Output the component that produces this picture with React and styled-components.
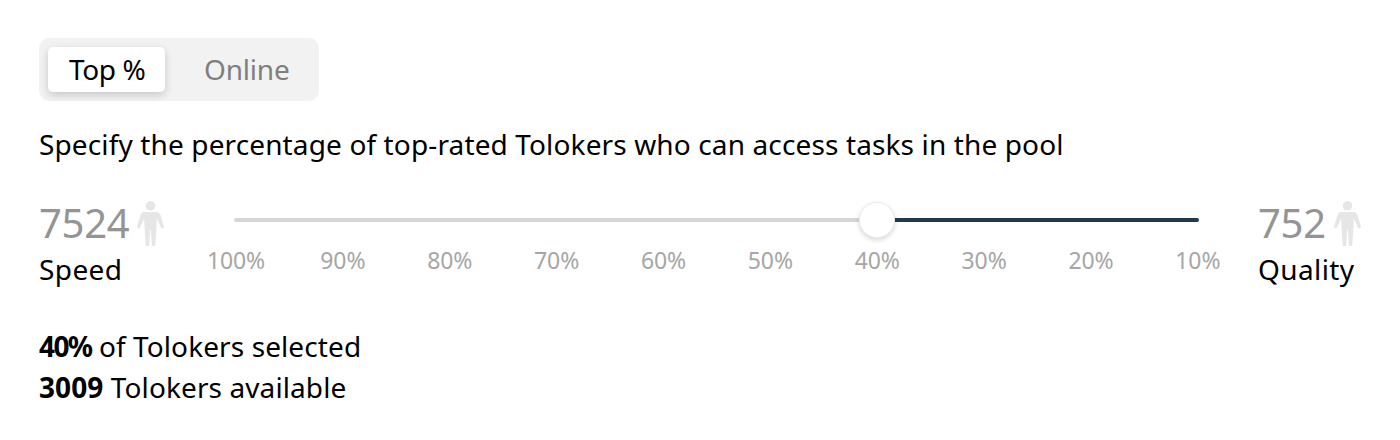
import React from "react";
import styled, { createGlobalStyle } from "styled-components";

const Global = createGlobalStyle`
  html, body { margin: 0; padding: 0; background: #fff; }
  body { font-family: "Noto Sans", "Open Sans", sans-serif; color: #000; }
`;

const Page = styled.div`
  width: 1400px;
  height: 440px;
  box-sizing: border-box;
  padding: 38px 39px 0;
  overflow: hidden;
`;

const Tabs = styled.div`
  display: flex;
  box-sizing: border-box;
  width: 280px;
  height: 63px;
  padding: 9px;
  background: #f2f2f2;
  border-radius: 10px;
`;

const Tab = styled.div`
  display: flex;
  align-items: center;
  box-sizing: border-box;
  width: ${(p) => (p.$active ? "117px" : "145px")};
  height: 45px;
  padding: 0 0 2px ${(p) => (p.$active ? "21px" : "39px")};
  font-size: 28px;
  letter-spacing: ${(p) => (p.$active ? "-0.4px" : "-0.2px")};
  border-radius: 5px;
  color: ${(p) => (p.$active ? "#000" : "#7f7f7f")};
  background: ${(p) => (p.$active ? "#fff" : "transparent")};
  box-shadow: ${(p) => (p.$active ? "0 3px 8px rgba(0,0,0,0.18)" : "none")};
`;

const Hint = styled.div`
  margin-top: 24px;
  font-size: 28px;
  line-height: 38px;
  letter-spacing: 0.13px;
  white-space: nowrap;
`;

const Row = styled.div`
  display: flex;
  margin-top: 35px;
  height: 100px;
`;

const Stat = styled.div`
  width: ${(p) => p.$width};
  margin-left: ${(p) => p.$gap || 0};
  flex: none;
`;

const StatTop = styled.div`
  display: flex;
  align-items: center;
  height: 50px;
  gap: 8px;
`;

const Count = styled.span`
  font-size: 40px;
  line-height: 50px;
  color: #949494;
  letter-spacing: -0.3px;
`;

const StatName = styled.div`
  margin-top: 2px;
  font-size: 28px;
  line-height: 38px;
  letter-spacing: 0.4px;
`;

const SliderBox = styled.div`
  width: 1022px;
  flex: none;
  margin-left: 20px;
`;

const Track = styled.div`
  position: relative;
  margin: 0 29px 3px 28px;
  height: 44px;
  display: flex;
  align-items: center;
`;

const TrackPart = styled.div`
  height: 4px;
  border-radius: 2px;
  width: ${(p) => p.$width};
  background: ${(p) => p.$color};
`;

const Thumb = styled.div`
  position: absolute;
  left: 625px;
  top: 4px;
  width: 36px;
  height: 36px;
  border-radius: 50%;
  background: #fff;
  border: 1px solid #ececec;
  box-sizing: border-box;
  box-shadow: 0 2px 5px rgba(0, 0, 0, 0.16);
`;

const Ticks = styled.div`
  display: flex;
  justify-content: space-between;
`;

const Tick = styled.div`
  width: 60px;
  text-align: center;
  font-size: 23px;
  line-height: 30px;
  letter-spacing: -0.1px;
  color: #a6a6a6;
  white-space: nowrap;
`;

const Summary = styled.div`
  margin-top: 28px;
  font-size: 28px;
  line-height: 41px;
  letter-spacing: 0.1px;
`;

const Strong = styled.b`
  letter-spacing: ${(p) => p.$tight || "0.1px"};
`;

const Person = () => (
  <svg width="27" height="45" viewBox="0 0 27 45" fill="#e6e6e6">
    <circle cx="13.500" cy="4.800" r="4.800" />
    <path d="M7.500 11h12c2 0 3.300 1 4 3l3.400 11.500c.5 1.700-2.300 2.500-3 .9L19.800 17.500l-.3 8.500-1.300 19h-3.300L13.900 29h-.8L12.100 45H8.800L7.500 26l-.3-8.500L3 26.400c-.7 1.600-3.500.8-3-.9L3.500 14c.7-2 2-3 4-3z" />
  </svg>
);

const ticks = ["100%", "90%", "80%", "70%", "60%", "50%", "40%", "30%", "20%", "10%"];

export default function App() {
  return (
    <Page>
      <Global />
      <Tabs>
        <Tab $active>Top %</Tab>
        <Tab>Online</Tab>
      </Tabs>
      <Hint>Specify the percentage of top-rated Tolokers who can access tasks in the pool</Hint>
      <Row>
        <Stat $width="147px">
          <StatTop>
            <Count>7524</Count>
            <Person />
          </StatTop>
          <StatName>Speed</StatName>
        </Stat>
        <SliderBox>
          <Track>
            <TrackPart $width="643px" $color="#d6d6d6" />
            <TrackPart $width="322px" $color="#22384d" />
            <Thumb />
          </Track>
          <Ticks>
            {ticks.map((t) => (
              <Tick key={t}>{t}</Tick>
            ))}
          </Ticks>
        </SliderBox>
        <Stat $width="120px" $gap="30px">
          <StatTop>
            <Count>752</Count>
            <Person />
          </StatTop>
          <StatName>Quality</StatName>
        </Stat>
      </Row>
      <Summary>
        <div><Strong $tight="-1.6px">40%</Strong> of Tolokers selected</div>
        <div><Strong>3009</Strong> Tolokers available</div>
      </Summary>
    </Page>
  );
}
